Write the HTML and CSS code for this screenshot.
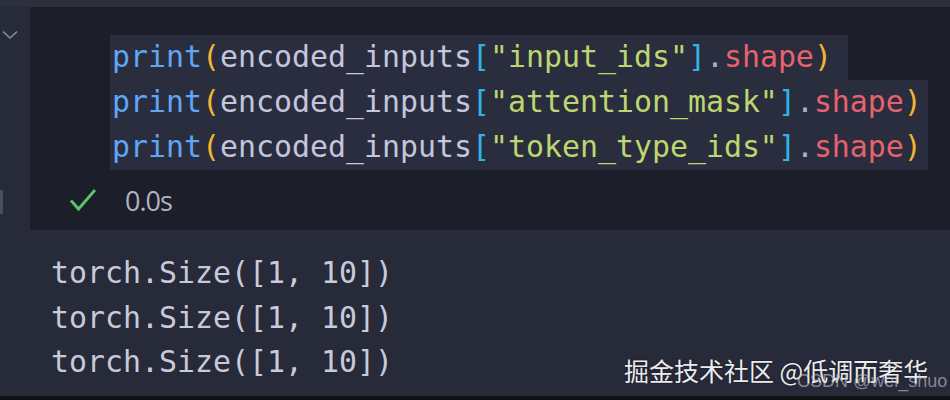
FILE: index.html
```html
<!DOCTYPE html>
<html>
<head>
<meta charset="utf-8">
<link rel="stylesheet" href="styles.css">
</head>
<body>
<div class="page">
  <div class="topstrip"></div>
  <div class="cellrow">
    <div class="gutter">
      <svg class="chev" width="16" height="10" viewBox="0 0 16 10"><path d="M1 1.5 L8 8 L15 1.5" fill="none" stroke="#8a8ea2" stroke-width="1.6"/></svg>
      <div class="gbar"></div>
    </div>
    <div class="cell">
      <div class="code">
        <div class="line l1"><span class="fn">print</span><span class="pa">(</span><span class="id">encoded_inputs</span><span class="br">[</span><span class="st">"input_ids"</span><span class="br">]</span><span class="dot">.</span><span class="pr">shape</span><span class="pa">)</span></div>
        <div class="line l2"><span class="fn">print</span><span class="pa">(</span><span class="id">encoded_inputs</span><span class="br">[</span><span class="st">"attention_mask"</span><span class="br">]</span><span class="dot">.</span><span class="pr">shape</span><span class="pa">)</span></div>
        <div class="line l3"><span class="fn">print</span><span class="pa">(</span><span class="id">encoded_inputs</span><span class="br">[</span><span class="st">"token_type_ids"</span><span class="br">]</span><span class="dot">.</span><span class="pr">shape</span><span class="pa">)</span></div>
      </div>
      <div class="status">
        <svg class="check" width="28" height="26" viewBox="0 0 28 26"><path d="M2 13.5 L9.5 22 L26 3" fill="none" stroke="#5cc46a" stroke-width="2.8"/></svg>
        <span class="time">0.0s</span>
      </div>
    </div>
  </div>
  <div class="output">
    <div class="oline">torch.Size([1, 10])</div>
    <div class="oline">torch.Size([1, 10])</div>
    <div class="oline">torch.Size([1, 10])</div>
  </div>
  <div class="bottomstrip"></div>
  <div class="wm">
    <span class="wm-main">掘金技术社区 @低调而奢华</span>
    <span class="wm-sub">CSDN @wei_shuo</span>
  </div>
</div>
</body>
</html>
```

FILE: styles.css
```css
html, body {
  margin: 0;
  padding: 0;
  background: #272a39;
}
.page {
  position: relative;
  width: 950px;
  height: 400px;
  overflow: hidden;
  display: flex;
  flex-direction: column;
  background: #272a39;
}
.topstrip {
  height: 7px;
  background: #2c2f3e;
}
.cellrow {
  display: flex;
  height: 223px;
}
.gutter {
  width: 30px;
  position: relative;
  display: flex;
  flex-direction: column;
}
.chev {
  margin: 23px 0 0 2px;
}
.gbar {
  width: 3px;
  height: 24px;
  margin-top: 150px;
  background: #4a4e60;
}
.cell {
  flex: 1;
  background: #1c1e29;
  display: flex;
  flex-direction: column;
}
.code {
  padding: 28px 0 0 80px;
  display: flex;
  flex-direction: column;
  align-items: flex-start;
  font-family: "DejaVu Sans Mono", "Liberation Mono", monospace;
  font-size: 29.9px;
  letter-spacing: 0;
}
.line {
  height: 45px;
  line-height: 43px;
  background: #2a2d3d;
  white-space: pre;
  padding-left: 2px;
}
.l1 { padding-right: 16px; }
.l2 { padding-right: 6px; }
.l3 { padding-right: 6px; }
.fn { color: #5ea6f6; }
.pa { color: #f2b431; }
.id { color: #c3c6de; }
.br { color: #2fb4e6; }
.st { color: #bdd66f; }
.dot { color: #9fb4cc; }
.pr { color: #e8626e; }
.status {
  display: flex;
  align-items: center;
  height: 44px;
  margin-top: 8px;
  padding-left: 39px;
}
.time {
  margin-left: 28px;
  font-family: "Open Sans", "Noto Sans", sans-serif;
  font-size: 27px;
  color: #aeb2c6;
  letter-spacing: -1px;
}
.output {
  padding: 21px 0 0 51px;
  display: flex;
  flex-direction: column;
  font-family: "DejaVu Sans Mono", "Liberation Mono", monospace;
  font-size: 29.9px;
  color: #c8cadb;
  flex: 1;
}
.oline {
  height: 44.5px;
  line-height: 43px;
  white-space: pre;
}
.bottomstrip {
  height: 4px;
  background: #111217;
}
.wm {
  position: absolute;
  left: 624px;
  top: 352px;
  width: 330px;
  height: 44px;
}
.wm-main {
  position: absolute;
  left: 0;
  top: 0;
  font-family: "Noto Sans CJK SC", sans-serif;
  font-size: 25px;
  line-height: 36px;
  color: #ececf0;
  white-space: nowrap;
  text-shadow: 0 0 2px rgba(0,0,0,0.6);
}
.wm-sub {
  position: absolute;
  left: 173px;
  top: 18px;
  font-family: "Liberation Sans", Arial, sans-serif;
  font-size: 18px;
  line-height: 22px;
  color: rgba(200,200,210,0.6);
  white-space: nowrap;
}
```
